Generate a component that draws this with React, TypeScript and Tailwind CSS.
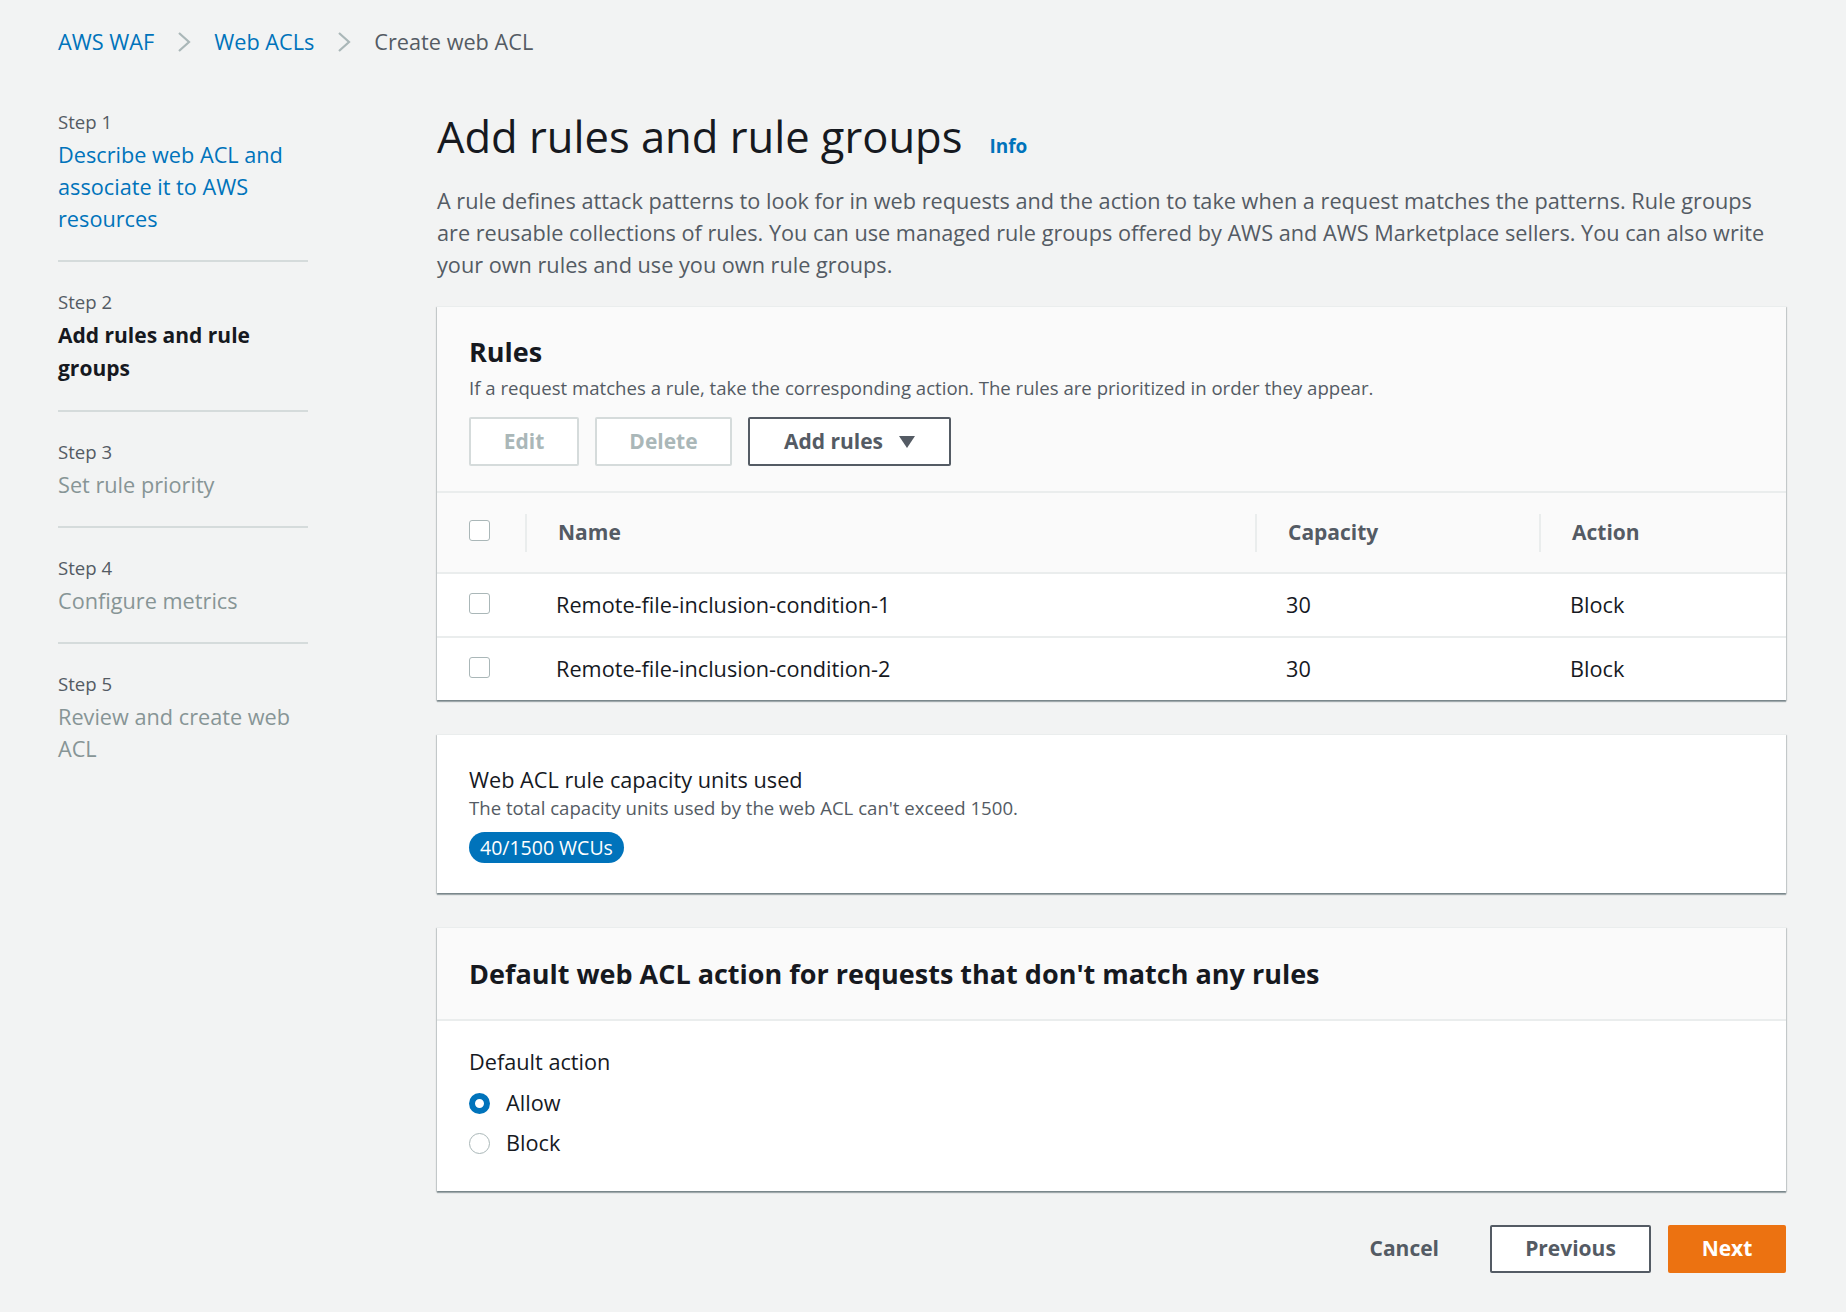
import React from "react";

const steps = [
  { label: "Step 1", title: "Describe web ACL and associate it to AWS resources", state: "link" },
  { label: "Step 2", title: "Add rules and rule groups", state: "active" },
  { label: "Step 3", title: "Set rule priority", state: "disabled" },
  { label: "Step 4", title: "Configure metrics", state: "disabled" },
  { label: "Step 5", title: "Review and create web ACL", state: "disabled" },
];

const rules = [
  { name: "Remote-file-inclusion-condition-1", capacity: 30, action: "Block" },
  { name: "Remote-file-inclusion-condition-2", capacity: 30, action: "Block" },
];

const panel =
  "bg-white border-t border-[#eaeded] shadow-[0_2px_1px_0_rgba(0,28,36,0.3),1px_1px_1px_0_rgba(0,28,36,0.15),-1px_1px_1px_0_rgba(0,28,36,0.15)]";

function Chevron() {
  return (
    <svg width="14" height="22" viewBox="0 0 14 22" fill="none">
      <polyline points="2,2 12,11 2,20" stroke="#aab7b8" strokeWidth="2.2" />
    </svg>
  );
}

function Checkbox() {
  return <div className="w-[21px] h-[21px] mb-[4px] rounded-[3px] border-[1.5px] border-[#aab7b8] bg-white" />;
}

function Radio({ checked }: { checked?: boolean }) {
  return checked ? (
    <div className="w-[21px] h-[21px] rounded-full border-[6px] border-[#0073bb] bg-white" />
  ) : (
    <div className="w-[21px] h-[21px] rounded-full border-[1.5px] border-[#aab7b8] bg-white" />
  );
}

export default function App() {
  return (
    <div className="min-h-screen bg-[#f2f3f3] font-['Open_Sans',sans-serif] text-[#16191f]">
      {/* Breadcrumbs */}
      <nav className="flex items-center gap-[23px] pl-[58px] pt-[26px] text-[21.7px] leading-[32px]">
        <span className="text-[#0073bb]">AWS WAF</span>
        <Chevron />
        <span className="text-[#0073bb]">Web ACLs</span>
        <Chevron />
        <span className="text-[#545b64]">Create web ACL</span>
      </nav>

      <div className="flex pt-[52px] pb-[40px]">
        {/* Wizard steps */}
        <aside className="w-[250px] ml-[58px] shrink-0">
          {steps.map((s, i) => (
            <div
              key={s.label}
              className={`${i === 0 ? "" : "pt-[28px]"} ${
                i === steps.length - 1 ? "" : "pb-[25px] border-b-2 border-[#d5dbdb]"
              }`}
            >
              <div className="text-[18.6px] leading-[24px] text-[#545b64]">{s.label}</div>
              <div
                className={`mt-[5px] ${
                  s.state === "link"
                    ? "text-[21.7px] leading-[32px] text-[#0073bb]"
                    : s.state === "active"
                    ? "text-[21px] leading-[33px] font-bold text-[#16191f]"
                    : "text-[21.7px] leading-[32px] text-[#879596]"
                }`}
              >
                {s.title}
              </div>
            </div>
          ))}
        </aside>

        {/* Main content */}
        <main className="ml-[129px] w-[1349px]">
          <div className="flex items-baseline gap-[27px]">
            <h1 className="text-[43.5px] leading-[54px] font-normal">Add rules and rule groups</h1>
            <span className="text-[19px] font-bold text-[#0073bb]">Info</span>
          </div>
          <p className="mt-[21px] text-[21.7px] leading-[32px] text-[#545b64]">
            A rule defines attack patterns to look for in web requests and the action to take when a request matches
            the patterns. Rule groups are reusable collections of rules. You can use managed rule groups offered by AWS
            and AWS Marketplace sellers. You can also write your own rules and use you own rule groups.
          </p>

          {/* Rules panel */}
          <section className={`mt-[25px] ${panel}`}>
            <div className="bg-[#fafafa] px-[32px] pt-[28px] pb-[25px] border-b-2 border-[#eaeded]">
              <h2 className="text-[27px] leading-[33px] font-bold">Rules</h2>
              <p className="mt-[8px] text-[18.6px] leading-[24px] text-[#545b64]">
                If a request matches a rule, take the corresponding action. The rules are prioritized in order they
                appear.
              </p>
              <div className="mt-[17px] flex gap-[16px]">
                <button className="h-[49px] w-[110px] border-2 border-[#d5dbdb] rounded-[2px] bg-white text-[21px] font-bold text-[#aab7b8]">
                  Edit
                </button>
                <button className="h-[49px] w-[137px] border-2 border-[#d5dbdb] rounded-[2px] bg-white text-[21px] font-bold text-[#aab7b8]">
                  Delete
                </button>
                <button className="h-[49px] w-[203px] border-2 border-[#545b64] rounded-[2px] bg-white text-[21px] font-bold text-[#545b64] flex items-center justify-center gap-[16px]">
                  Add rules
                  <svg width="16" height="12" viewBox="0 0 16 12">
                    <polygon points="0,0 16,0 8,12" fill="#545b64" />
                  </svg>
                </button>
              </div>
            </div>

            <div className="grid grid-cols-[88px_730px_284px_1fr] text-[21.7px]">
              {/* header */}
              <div className="h-[79px] bg-[#fafafa] flex items-center pl-[32px]">
                <Checkbox />
              </div>
              {["Name", "Capacity", "Action"].map((h) => (
                <div key={h} className="h-[79px] bg-[#fafafa] flex items-center">
                  <div className="w-[2px] h-[38px] bg-[#eaeded]" />
                  <span className="ml-[31px] text-[21px] font-bold text-[#545b64]">{h}</span>
                </div>
              ))}
              {/* rows */}
              {rules.map((r) => (
                <React.Fragment key={r.name}>
                  <div className="h-[64px] border-t-2 border-[#eaeded] flex items-center pl-[32px]">
                    <Checkbox />
                  </div>
                  <div className="h-[64px] border-t-2 border-[#eaeded] flex items-center pl-[31px]">{r.name}</div>
                  <div className="h-[64px] border-t-2 border-[#eaeded] flex items-center pl-[31px]">{r.capacity}</div>
                  <div className="h-[64px] border-t-2 border-[#eaeded] flex items-center pl-[31px]">{r.action}</div>
                </React.Fragment>
              ))}
            </div>
          </section>

          {/* Capacity panel */}
          <section className={`mt-[34px] px-[32px] pt-[29px] pb-[30px] ${panel}`}>
            <div className="text-[21.7px] leading-[32px]">Web ACL rule capacity units used</div>
            <div className="text-[18.6px] leading-[24px] text-[#545b64]">
              The total capacity units used by the web ACL can't exceed 1500.
            </div>
            <div className="mt-[12px] inline-flex items-center h-[31px] px-[11px] rounded-full bg-[#0073bb] text-white text-[19.5px]">
              40/1500 WCUs
            </div>
          </section>

          {/* Default action panel */}
          <section className={`mt-[34px] ${panel}`}>
            <div className="bg-[#fafafa] px-[32px] pt-[29px] pb-[29px] border-b-2 border-[#eaeded]">
              <h2 className="text-[27px] leading-[33px] font-bold">
                Default web ACL action for requests that don't match any rules
              </h2>
            </div>
            <div className="px-[32px] pt-[25px] pb-[28px]">
              <div className="text-[21.7px] leading-[32px]">Default action</div>
              <div className="mt-[5px] flex flex-col">
                <label className="h-[40px] flex items-center gap-[16px] text-[21.7px]">
                  <Radio checked />
                  Allow
                </label>
                <label className="h-[40px] flex items-center gap-[16px] text-[21.7px]">
                  <Radio />
                  Block
                </label>
              </div>
            </div>
          </section>

          {/* Footer actions */}
          <div className="mt-[34px] flex justify-end items-center gap-[17px]">
            <button className="h-[48px] px-[25px] text-[21px] font-bold text-[#545b64]">Cancel</button>
            <button className="ml-[9px] h-[48px] w-[161px] border-2 border-[#545b64] rounded-[2px] bg-white text-[21px] font-bold text-[#545b64]">
              Previous
            </button>
            <button className="h-[48px] w-[118px] rounded-[2px] bg-[#ec7211] text-[21px] font-bold text-white">
              Next
            </button>
          </div>
        </main>
      </div>
    </div>
  );
}
